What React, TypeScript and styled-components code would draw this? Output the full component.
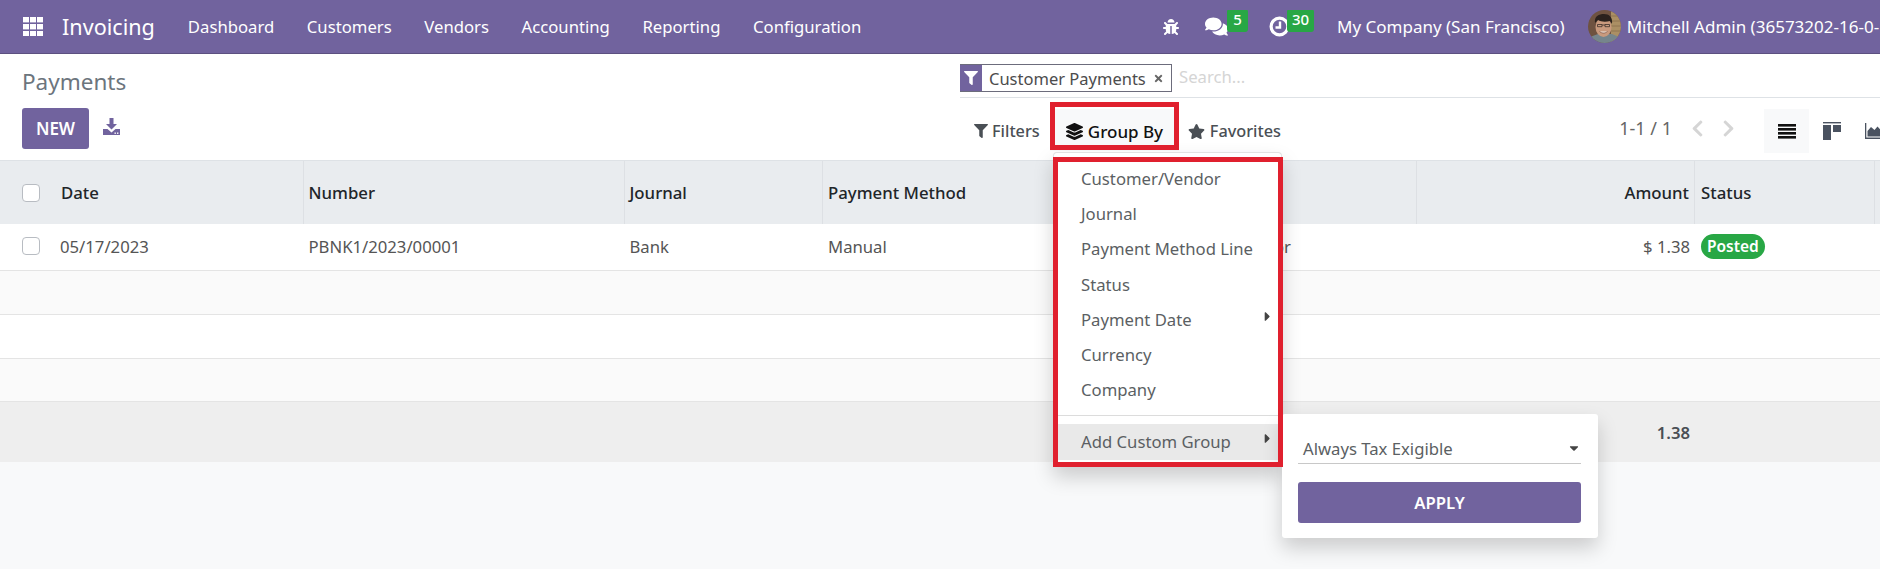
import { createGlobalStyle } from "styled-components";
import styled from "styled-components";
import {
  FaBug,
  FaCaretDown,
  FaCaretRight,
  FaChevronLeft,
  FaChevronRight,
  FaComments,
  FaFilter,
  FaLayerGroup,
  FaStar,
  FaTimes,
} from "react-icons/fa";

const PURPLE = "#71639e";

const GlobalStyle = createGlobalStyle`
  html, body, #root {
    margin: 0;
    height: 100%;
  }
  body {
    font-family: "Noto Sans", "Open Sans", sans-serif;
    font-size: 16.7px;
    color: #4c4c4c;
    background: #f8f9fa;
    overflow: hidden;
  }
`;

// --- icons drawn by hand ---

const AppsIcon = () => (
  <svg width="20" height="19" viewBox="0 0 20 19" fill="#fff">
    {[0, 7, 14].map((y) =>
      [0, 7, 14].map((x) => <rect key={`${x}-${y}`} x={x} y={y} width="6" height="5.4" />)
    )}
  </svg>
);

const ClockIcon = () => (
  <svg width="21" height="21" viewBox="0 0 21 21" fill="none" stroke="#fff">
    <circle cx="10.5" cy="10.5" r="8.4" strokeWidth="3.2" />
    <path d="M11 5.5v6H6.5" strokeWidth="2.4" />
  </svg>
);

const DownloadIcon = () => (
  <svg width="17" height="17" viewBox="0 0 17 17" fill={PURPLE}>
    <path d="M6.500 0h4v6h3.500l-5.500 5.500L3 6h3.500z" />
    <path d="M0 11h4.500l4 3.500 4-3.500H17v6H0z" />
    <rect x="11.500" y="14.500" width="1.400" height="1.400" fill="#fff" />
    <rect x="14" y="14.500" width="1.400" height="1.400" fill="#fff" />
  </svg>
);

const ListIcon = () => (
  <svg width="18" height="15" viewBox="0 0 18 15" fill="#111">
    <rect y="0" width="18" height="2.6" />
    <rect y="4" width="18" height="2.6" />
    <rect y="8" width="18" height="2.6" />
    <rect y="12" width="18" height="2.6" />
  </svg>
);

const KanbanIcon = () => (
  <svg width="18" height="18" viewBox="0 0 18 18" fill="#4a5260">
    <rect width="18" height="1.4" />
    <rect y="3" width="8" height="15" />
    <rect x="10" y="3" width="8" height="7" />
  </svg>
);

const ChartIcon = () => (
  <svg width="24" height="16" viewBox="0 0 24 16" fill="#4a5260">
    <path d="M0 0h1.300v14.600H24V16H0z" />
    <path d="M2.500 13.500V8l3.500-4 3.500 3 3-3.500 5 5.500v4.500z" />
  </svg>
);

const Avatar = () => (
  <svg width="33" height="33" viewBox="0 0 33 33">
    <defs>
      <clipPath id="avatarClip">
        <circle cx="16.500" cy="16.500" r="16.500" />
      </clipPath>
    </defs>
    <g clipPath="url(#avatarClip)">
      <rect width="33" height="33" fill="#6e5240" />
      <rect x="23" width="10" height="33" fill="#ab8f64" />
      <path d="M23 6h10M23 11h10M23 16h10M23 21h10" stroke="#8f7550" strokeWidth="1" />
      <path d="M2 33v-6l8-3h14l7 3v6z" fill="#76858c" />
      <ellipse cx="15.500" cy="17" rx="8" ry="10" fill="#c99a7e" />
      <path d="M7 13C6 6 11 4 16 4s9 3 8 10l-2-3c-4 1-9 1-12-1z" fill="#2a211d" />
      <path d="M9.500 14.500h4.500v2.200H9.500zM17 14.500h4.500v2.200H17zM14 15h3" fill="none" stroke="#3a2e2a" strokeWidth="0.8" />
      <path d="M11.500 21.500c2.500 2 5.500 2 8 0" fill="#efe6de" stroke="#7a4a3c" strokeWidth="0.7" />
    </g>
  </svg>
);

// --- page ---

const Page = styled.div`
  position: relative;
  width: 1880px;
  height: 569px;
  overflow: hidden;
  background: #f8f9fa;
`;

const NavBar = styled.header`
  display: flex;
  align-items: center;
  height: 53px;
  padding-left: 23px;
  background: ${PURPLE};
  border-bottom: 1px solid #5c5080;
  color: #fff;
  white-space: nowrap;
`;

const Brand = styled.span`
  margin-left: 19px;
  margin-right: 33px;
  font-size: 21.6px;
`;

const NavMenu = styled.nav`
  display: flex;
  gap: 32.6px;
`;

const NavTools = styled.div`
  display: flex;
  align-items: center;
  margin-left: auto;
  flex: 0 0 717px;
  overflow: hidden;
  font-size: 17px;
`;

const ToolIcon = styled.span<{ $right: number }>`
  position: relative;
  display: flex;
  flex: none;
  margin-right: ${(p) => p.$right}px;
`;

const CountBadge = styled.span<{ $left: number; $top: number; $wide?: boolean }>`
  position: absolute;
  left: ${(p) => p.$left}px;
  top: ${(p) => p.$top}px;
  height: 23px;
  width: ${(p) => (p.$wide ? 27 : 21)}px;
  box-sizing: border-box;
  border-radius: 3px;
  background: #28a745;
  font-size: 15px;
  font-weight: 500;
  line-height: 20px;
  text-align: center;
`;

const CompanyName = styled.span`
  margin-right: 23px;
`;

const UserName = styled.span`
  margin-left: 6px;
`;

const AvatarSlot = styled.span`
  display: flex;
  flex: none;
`;

const ControlPanel = styled.section`
  display: grid;
  grid-template-columns: 960px 1fr;
  height: 107px;
  background: #fff;
  border-bottom: 1px solid #dee2e6;
  box-sizing: border-box;
`;

const TitleColumn = styled.div`
  display: flex;
  flex-direction: column;
  padding: 14px 0 0 22px;
`;

const PageTitle = styled.h1`
  margin: 0;
  font-size: 22.5px;
  font-weight: 400;
  line-height: 28px;
  color: #6c757d;
`;

const ActionRow = styled.div`
  display: flex;
  align-items: center;
  gap: 14px;
  margin-top: 12px;
`;

const NewButton = styled.button`
  width: 67px;
  height: 41px;
  border: 0;
  border-radius: 3px;
  background: ${PURPLE};
  color: #fff;
  font: 600 17px "Noto Sans", sans-serif;
`;

const DownloadLink = styled.span`
  display: flex;
  margin-top: -5px;
`;

const SearchColumn = styled.div`
  display: flex;
  flex-direction: column;
`;

const SearchRow = styled.div`
  display: flex;
  align-items: flex-start;
  height: 44px;
  padding-top: 10px;
  box-sizing: border-box;
  border-bottom: 1px solid #dee2e6;
`;

const Facet = styled.div`
  display: flex;
  align-items: center;
  height: 28px;
  width: 212px;
  box-sizing: border-box;
  border: 1px solid #6c6c7c;
  color: #4c4c4c;
`;

const FacetIcon = styled.span`
  display: flex;
  align-items: center;
  justify-content: center;
  align-self: stretch;
  width: 22px;
  margin-left: -1px;
  background: ${PURPLE};
  color: #fff;
  font-size: 14px;
`;

const FacetLabel = styled.span`
  margin-left: 7px;
  font-size: 16.5px;
`;

const FacetClose = styled.span`
  display: flex;
  margin-left: 7px;
  font-size: 11px;
  color: #666;
`;

const SearchHint = styled.span`
  margin-left: 7px;
  line-height: 26px;
  color: #d5d5d5;
`;

const ToolRow = styled.div`
  display: flex;
  align-items: center;
  height: 55px;
  padding: 11px 0 0 14px;
  box-sizing: border-box;
`;

const FilterButton = styled.span<{ $active?: boolean; $gap: number }>`
  display: flex;
  align-items: center;
  gap: ${(p) => p.$gap}px;
  font-size: ${(p) => (p.$active ? 17 : 16.3)}px;
  font-weight: 500;
  color: ${(p) => (p.$active ? "#111" : "#4a4f55")};
`;

const FilterGroup = styled.div`
  display: flex;
  align-items: center;
  align-self: flex-start;
  width: 129px;
  height: 42px;
  margin: 0 9px 0 10px;
  padding: 2px 0 0 16px;
  box-sizing: border-box;
  background: #f8f9fa;
`;

const Pager = styled.div`
  display: flex;
  align-items: center;
  margin: -6px 0 0 auto;
  font-size: 18px;
  color: #666;
`;

const PagerArrow = styled.span<{ $left: number }>`
  display: flex;
  margin-left: ${(p) => p.$left}px;
  font-size: 19px;
  color: #d5d5d5;
`;

const Views = styled.div`
  display: flex;
  align-items: center;
  margin-left: 26px;
  margin-right: -2px;
  width: 118px;
  overflow: hidden;
`;

const ViewButton = styled.span<{ $active?: boolean }>`
  display: flex;
  flex: 0 0 auto;
  align-items: center;
  justify-content: center;
  width: 45px;
  height: 44px;
  background: ${(p) => (p.$active ? "#f8f9fa" : "transparent")};
`;

const Row = styled.div<{ $bg?: string; $h?: number }>`
  display: grid;
  grid-template-columns: 55px 248.5px 321px 198.5px 232px 362px 278px 180px 5px;
  align-items: center;
  height: ${(p) => p.$h ?? 44}px;
  box-sizing: border-box;
  border-bottom: 1px solid #e4e4e4;
  background: ${(p) => p.$bg ?? "#fff"};
`;

const HeadRow = styled(Row)`
  height: 63px;
  border-bottom: 0;
  background: #e9ecef;
  font-size: 16.8px;
  font-weight: 500;
  color: #212529;
`;

const DataRow = styled(Row)`
  height: 47px;
  padding-bottom: 2px;
  color: #555;
`;

const FootRow = styled(Row)`
  height: 60px;
  border-bottom: 0;
  background: #eeeeee;
  font-weight: 600;
  color: #4a4f55;
`;

const HeadCell = styled.div<{ $right?: boolean; $inset?: number }>`
  align-self: stretch;
  display: flex;
  align-items: center;
  justify-content: ${(p) => (p.$right ? "flex-end" : "flex-start")};
  padding: 0 5px 0 ${(p) => p.$inset ?? 5}px;
  border-right: 1px solid #dde0e4;
  white-space: nowrap;
`;

const Cell = styled.div<{ $right?: boolean }>`
  padding: 0 5px;
  text-align: ${(p) => (p.$right ? "right" : "left")};
  white-space: nowrap;
`;

const PartnerCell = styled(Cell)`
  text-align: right;
  padding-right: 126px;
`;

const CheckCell = styled.div`
  display: flex;
  padding-left: 22px;
`;

const CheckBox = styled.span`
  width: 18px;
  height: 18px;
  box-sizing: border-box;
  border: 1px solid #b8bcc2;
  border-radius: 4px;
  background: #fff;
`;

const StatusPill = styled.span`
  display: inline-block;
  height: 25px;
  margin-left: 1px;
  padding: 0 6px;
  border-radius: 13px;
  background: #28a745;
  color: #fff;
  font-size: 15.5px;
  font-weight: 600;
  line-height: 24px;
`;

const GroupMenu = styled.div`
  position: absolute;
  left: 1053px;
  top: 152px;
  width: 229px;
  height: 315px;
  box-sizing: border-box;
  padding-top: 8px;
  background: #fff;
  border: 1px solid #e2e2e2;
  border-bottom: 0;
  border-radius: 4px 4px 0 0;
  box-shadow: 0 10px 20px rgba(0, 0, 0, 0.18);
`;

const MenuItem = styled.div<{ $open?: boolean }>`
  position: relative;
  height: 35.2px;
  padding-left: 27px;
  line-height: 35px;
  color: #5b5f63;
  background: ${(p) => (p.$open ? "#e9e9e9" : "transparent")};
`;

const MenuCaret = styled.span`
  position: absolute;
  right: 6px;
  top: 7px;
  display: flex;
  font-size: 15px;
  color: #444;
`;

const MenuDivider = styled.div`
  height: 1px;
  margin: 8px 0 8px;
  background: #dcdcdc;
`;

const HighlightBox = styled.div<{ $left: number; $top: number; $width: number; $height: number }>`
  position: absolute;
  left: ${(p) => p.$left}px;
  top: ${(p) => p.$top}px;
  width: ${(p) => p.$width}px;
  height: ${(p) => p.$height}px;
  box-sizing: border-box;
  border: 5px solid #e0202e;
  pointer-events: none;
`;

const CustomGroupPanel = styled.div`
  position: absolute;
  left: 1282px;
  top: 414px;
  width: 316px;
  height: 124px;
  box-sizing: border-box;
  padding: 16px 17px 0 16px;
  background: #fff;
  border-radius: 3px;
  box-shadow: 0 10px 20px rgba(0, 0, 0, 0.18);
`;

const FieldSelect = styled.div`
  display: flex;
  align-items: center;
  justify-content: space-between;
  height: 34px;
  padding: 3px 0 0 5px;
  box-sizing: border-box;
  border-bottom: 1px solid #c8c8c8;
  color: #5b5f63;
`;

const ApplyButton = styled.button`
  display: block;
  width: 100%;
  height: 41px;
  margin-top: 18px;
  border: 0;
  border-radius: 3px;
  background: ${PURPLE};
  color: #fff;
  font: 600 16.7px "Noto Sans", sans-serif;
`;

const groupFields = ["Customer/Vendor", "Journal", "Payment Method Line", "Status", "Payment Date", "Currency", "Company"];

export default function App() {
  return (
    <Page>
      <GlobalStyle />
      <NavBar>
        <AppsIcon />
        <Brand>Invoicing</Brand>
        <NavMenu>
          <span>Dashboard</span>
          <span>Customers</span>
          <span>Vendors</span>
          <span>Accounting</span>
          <span>Reporting</span>
          <span>Configuration</span>
        </NavMenu>
        <NavTools>
          <ToolIcon $right={26}>
            <FaBug size={16} />
          </ToolIcon>
          <ToolIcon $right={41}>
            <FaComments size={23} />
            <CountBadge $left={22} $top={-6}>5</CountBadge>
          </ToolIcon>
          <ToolIcon $right={47}>
            <ClockIcon />
            <CountBadge $left={18} $top={-7} $wide>30</CountBadge>
          </ToolIcon>
          <CompanyName>My Company (San Francisco)</CompanyName>
          <AvatarSlot>
            <Avatar />
          </AvatarSlot>
          <UserName>Mitchell Admin (36573202-16-0-</UserName>
        </NavTools>
      </NavBar>

      <ControlPanel>
        <TitleColumn>
          <PageTitle>Payments</PageTitle>
          <ActionRow>
            <NewButton>NEW</NewButton>
            <DownloadLink>
              <DownloadIcon />
            </DownloadLink>
          </ActionRow>
        </TitleColumn>
        <SearchColumn>
          <SearchRow>
            <Facet>
              <FacetIcon>
                <FaFilter />
              </FacetIcon>
              <FacetLabel>Customer Payments</FacetLabel>
              <FacetClose>
                <FaTimes />
              </FacetClose>
            </Facet>
            <SearchHint>Search...</SearchHint>
          </SearchRow>
          <ToolRow>
            <FilterButton $gap={4}>
              <FaFilter size={14} />
              Filters
            </FilterButton>
            <FilterGroup>
              <FilterButton $active $gap={5}>
                <FaLayerGroup size={17} />
                Group By
              </FilterButton>
            </FilterGroup>
            <FilterButton $gap={5}>
              <FaStar size={17} />
              Favorites
            </FilterButton>
            <Pager>
              1-1 / 1
              <PagerArrow $left={16}>
                <FaChevronLeft />
              </PagerArrow>
              <PagerArrow $left={12}>
                <FaChevronRight />
              </PagerArrow>
            </Pager>
            <Views>
              <ViewButton $active>
                <ListIcon />
              </ViewButton>
              <ViewButton>
                <KanbanIcon />
              </ViewButton>
              <ViewButton>
                <ChartIcon />
              </ViewButton>
            </Views>
          </ToolRow>
        </SearchColumn>
      </ControlPanel>

      <HeadRow>
        <CheckCell>
          <CheckBox />
        </CheckCell>
        <HeadCell $inset={6}>Date</HeadCell>
        <HeadCell>Number</HeadCell>
        <HeadCell>Journal</HeadCell>
        <HeadCell>Payment Method</HeadCell>
        <HeadCell />
        <HeadCell $right>Amount</HeadCell>
        <HeadCell $inset={6}>Status</HeadCell>
        <div />
      </HeadRow>
      <DataRow>
        <CheckCell>
          <CheckBox />
        </CheckCell>
        <Cell>05/17/2023</Cell>
        <Cell>PBNK1/2023/00001</Cell>
        <Cell>Bank</Cell>
        <Cell>Manual</Cell>
        <PartnerCell>or</PartnerCell>
        <Cell $right>$ 1.38</Cell>
        <Cell>
          <StatusPill>Posted</StatusPill>
        </Cell>
      </DataRow>
      <Row $bg="#fafafa" />
      <Row $bg="#fff" />
      <Row $bg="#fafafa" $h={43} />
      <FootRow>
        <div />
        <div />
        <div />
        <div />
        <div />
        <div />
        <Cell $right>1.38</Cell>
      </FootRow>

      <GroupMenu>
        {groupFields.map((f) => (
          <MenuItem key={f}>
            {f}
            {f === "Payment Date" && (
              <MenuCaret>
                <FaCaretRight />
              </MenuCaret>
            )}
          </MenuItem>
        ))}
        <MenuDivider />
        <MenuItem $open>
          Add Custom Group
          <MenuCaret>
            <FaCaretRight />
          </MenuCaret>
        </MenuItem>
      </GroupMenu>

      <CustomGroupPanel>
        <FieldSelect>
          Always Tax Exigible
          <FaCaretDown size={14} color="#444" />
        </FieldSelect>
        <ApplyButton>APPLY</ApplyButton>
      </CustomGroupPanel>

      <HighlightBox $left={1050} $top={102} $width={129} $height={48} />
      <HighlightBox $left={1053} $top={157} $width={230} $height={310} />
    </Page>
  );
}
